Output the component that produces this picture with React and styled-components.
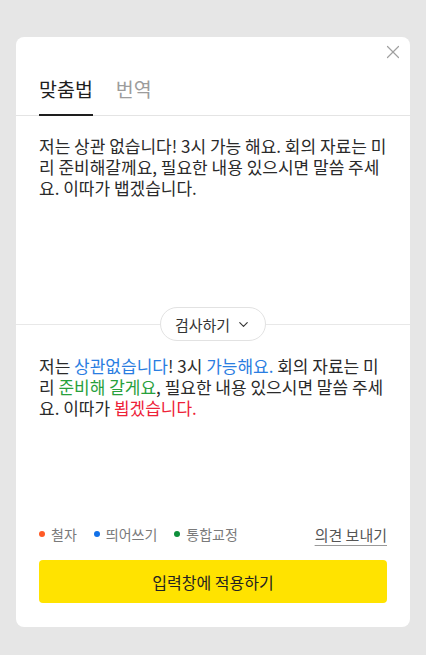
import React, { useState } from "react";
import styled, { createGlobalStyle } from "styled-components";
import { ChevronDown, X } from "lucide-react";

const GlobalStyle = createGlobalStyle`
  html, body {
    margin: 0;
    padding: 0;
    background: #e6e6e6;
  }
  body {
    font-family: "Noto Sans CJK KR", "Noto Sans", sans-serif;
    color: #222;
  }
`;

const legendItems = [
  { id: "spell", label: "철자", color: "#ff5a26" },
  { id: "space", label: "띄어쓰기", color: "#1170e8" },
  { id: "total", label: "통합교정", color: "#0d8f3b" },
];

const App = () => {
  const [tab, setTab] = useState("spell");

  return (
    <>
      <GlobalStyle />
      <Page>
        <Card>
          <CloseButton aria-label="닫기">
            <X size={22} strokeWidth={1.3} />
          </CloseButton>

          <Tabs>
            <Tab $active={tab === "spell"} onClick={() => setTab("spell")}>
              맞춤법
            </Tab>
            <Tab $active={tab === "trans"} onClick={() => setTab("trans")}>
              번역
            </Tab>
          </Tabs>

          <Source>
            저는 상관 없습니다! 3시 가능 해요. 회의 자료는 미리
            준비해갈께요, 필요한 내용 있으시면 말씀 주세요. 이따가
            뱁겠습니다.
          </Source>

          <DividerRow>
            <Line />
            <CheckButton>
              검사하기
              <ChevronDown size={15} strokeWidth={1.8} />
            </CheckButton>
            <Line />
          </DividerRow>

          <Result>
            저는 <Mark $tone="blue">상관없습니다</Mark>! 3시{" "}
            <Mark $tone="blue">가능해요.</Mark> 회의 자료는 미리{" "}
            <Mark $tone="green">준비해 갈게요</Mark>, 필요한 내용 있으시면
            말씀 주세요. 이따가 <Mark $tone="red">뵙겠습니다.</Mark>
          </Result>

          <Footer>
            <LegendRow>
              {legendItems.map((item) => (
                <LegendItem key={item.id}>
                  <Dot $color={item.color} />
                  {item.label}
                </LegendItem>
              ))}
              <Feedback href="#">의견 보내기</Feedback>
            </LegendRow>
            <ApplyButton>입력창에 적용하기</ApplyButton>
          </Footer>
        </Card>
      </Page>
    </>
  );
};

const toneColors = {
  blue: "#2a7de1",
  green: "#27a03c",
  red: "#ee2238",
};

const Page = styled.div`
  padding: 37px 16px 28px;
`;

const Card = styled.div`
  position: relative;
  height: 590px;
  background: #fff;
  border-radius: 8px;
  display: flex;
  flex-direction: column;
  box-sizing: border-box;
  padding-top: 39px;
`;

const CloseButton = styled.button`
  position: absolute;
  top: 4px;
  right: 6px;
  width: 22px;
  height: 22px;
  padding: 0;
  border: 0;
  background: none;
  color: #a0a0a0;
  display: flex;
  align-items: center;
  justify-content: center;
  cursor: pointer;
`;

const Tabs = styled.div`
  display: flex;
  gap: 23px;
  padding: 0 23px;
  border-bottom: 1px solid #e4e4e4;
`;

const Tab = styled.div`
  font-size: 19.5px;
  line-height: 25px;
  padding-bottom: 13px;
  color: ${(p) => (p.$active ? "#1e1e1e" : "#9c9c9c")};
  border-bottom: 2px solid ${(p) => (p.$active ? "#1e1e1e" : "transparent")};
  margin-bottom: -1px;
  cursor: pointer;
`;

const Source = styled.p`
  margin: 0;
  height: 191px;
  box-sizing: border-box;
  padding: 19px 23px 0;
  font-size: 17px;
  line-height: 21px;
  color: #2a2a2a;
  word-break: break-all;
`;

const DividerRow = styled.div`
  display: flex;
  align-items: center;
`;

const Line = styled.div`
  flex: 1;
  height: 1px;
  background: #e8e8e8;
`;

const CheckButton = styled.button`
  height: 34px;
  padding: 0 14px 0 14px;
  border: 1px solid #e2e2e2;
  border-radius: 17px;
  background: #fff;
  font-family: inherit;
  font-size: 15px;
  color: #333;
  display: flex;
  align-items: center;
  gap: 6px;
  cursor: pointer;
`;

const Result = styled.p`
  flex: 1;
  margin: 0;
  padding: 14px 23px 0;
  font-size: 17px;
  line-height: 21px;
  color: #2a2a2a;
  word-break: break-all;
`;

const Mark = styled.span`
  color: ${(p) => toneColors[p.$tone]};
`;

const Footer = styled.div`
  padding: 0 23px 24px;
  display: flex;
  flex-direction: column;
  gap: 16px;
`;

const LegendRow = styled.div`
  display: flex;
  align-items: center;
  gap: 17px;
  height: 20px;
`;

const LegendItem = styled.span`
  display: flex;
  align-items: center;
  gap: 6px;
  font-size: 14px;
  color: #7a7a7a;
`;

const Dot = styled.i`
  width: 6px;
  height: 6px;
  border-radius: 50%;
  background: ${(p) => p.$color};
`;

const Feedback = styled.a`
  margin-left: auto;
  font-size: 15px;
  color: #555;
  text-decoration: underline;
  text-underline-offset: 4px;
  text-decoration-color: #999;
`;

const ApplyButton = styled.button`
  height: 43px;
  border: 0;
  border-radius: 4px;
  background: #ffe300;
  font-family: inherit;
  font-size: 16px;
  color: #222;
  cursor: pointer;
`;

export default App;
